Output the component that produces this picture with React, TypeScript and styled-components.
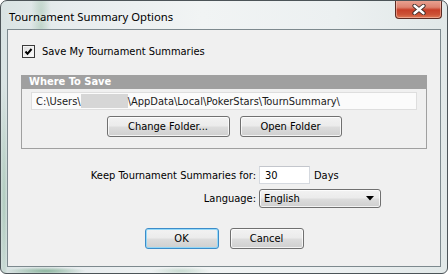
import React from "react";
import styled, { createGlobalStyle } from "styled-components";

const GlobalStyle = createGlobalStyle`
  html, body {
    margin: 0;
    padding: 0;
    background: #ffffff;
  }
  body {
    width: 448px;
    height: 274px;
    overflow: hidden;
  }
`;

const uiFont = `"DejaVu Sans Condensed", "DejaVu Sans", sans-serif`;

function App() {
  return (
    <>
      <GlobalStyle />
      <Window>
        <TitleBar>
          <Title>Tournament Summary Options</Title>
          <CloseButton aria-label="Close">
            <svg width="14" height="11" viewBox="0 0 14 11">
              <path
                d="M2.5 1.8 L11.5 9.2 M11.5 1.8 L2.5 9.2"
                stroke="#3a2a26"
                strokeWidth="4.2"
                strokeLinecap="round"
              />
              <path
                d="M2.5 1.8 L11.5 9.2 M11.5 1.8 L2.5 9.2"
                stroke="#ffffff"
                strokeWidth="2.4"
                strokeLinecap="round"
              />
            </svg>
          </CloseButton>
        </TitleBar>

        <Client>
          <CheckRow>
            <CheckBox>
              <svg width="11" height="11" viewBox="0 0 11 11">
                <path
                  d="M2.5 5.5 L4.5 7.8 L8.5 3"
                  fill="none"
                  stroke="#000"
                  strokeWidth="2"
                />
              </svg>
            </CheckBox>
            <span>Save My Tournament Summaries</span>
          </CheckRow>

          <Group>
            <GroupHeader>Where To Save</GroupHeader>
            <PathField>
              C:\Users\
              <Redacted />
              \AppData\Local\PokerStars\TournSummary\
            </PathField>
            <ButtonRow>
              <Button $width={123}>Change Folder...</Button>
              <Button $width={102}>Open Folder</Button>
            </ButtonRow>
          </Group>

          <Form>
            <Label>Keep Tournament Summaries for:</Label>
            <Inline>
              <NumberInput readOnly value="30" />
              <span>Days</span>
            </Inline>
            <Label>Language:</Label>
            <Select>
              <span>English</span>
              <svg width="8" height="5" viewBox="0 0 8 5">
                <path d="M0 0 H8 L4 4.5 Z" fill="#000" />
              </svg>
            </Select>
          </Form>

          <Footer>
            <Button $width={74} $default>
              OK
            </Button>
            <Button $width={74}>Cancel</Button>
          </Footer>
        </Client>
      </Window>
    </>
  );
}

const Window = styled.div`
  box-sizing: border-box;
  width: 448px;
  height: 274px;
  display: flex;
  flex-direction: column;
  border: 1px solid #4c5458;
  border-radius: 7px 7px 6px 6px;
  padding: 0 6px 6px;
  overflow: hidden;
  background:
    radial-gradient(ellipse 10px 70px at 40px 20px, rgba(110, 165, 125, 0.3), transparent),
    radial-gradient(ellipse 40px 4px at 45px 270px, rgba(80, 145, 105, 0.6), transparent),
    radial-gradient(ellipse 30px 4px at 180px 270px, rgba(120, 170, 140, 0.35), transparent),
    radial-gradient(ellipse 4px 120px at 3px 200px, rgba(110, 165, 130, 0.4), transparent),
    linear-gradient(to right, #d9e3e3 0%, #e7ecee 15%, #f1f4f4 45%, #ecf0f1 75%, #e1e8e8 100%);
`;

const TitleBar = styled.div`
  height: 28px;
  display: flex;
  align-items: center;
  justify-content: space-between;
`;

const Title = styled.span`
  margin-left: 2px;
  margin-top: 2px;
  font-family: "Noto Sans", "Open Sans", sans-serif;
  font-size: 11.3px;
  color: #000;
  text-shadow: 0 0 6px rgba(255, 255, 255, 0.9);
`;

const CloseButton = styled.div`
  align-self: flex-start;
  box-sizing: border-box;
  width: 47px;
  height: 19px;
  margin-top: -1px;
  margin-right: -1px;
  display: flex;
  align-items: center;
  justify-content: center;
  border: 1px solid #5c2b22;
  border-top: none;
  border-radius: 0 0 4px 4px;
  background: linear-gradient(#eaa595 0%, #dd8370 40%, #c73f28 55%, #cc5236 80%, #de7a55 100%);
  box-shadow: inset 0 0 0 1px rgba(255, 220, 210, 0.45);
`;

const Client = styled.div`
  flex: 1;
  display: flex;
  flex-direction: column;
  border: 1px solid #7d898e;
  background: #f0f0f0;
  padding: 15px 13px 0;
  font-family: ${uiFont};
  font-size: 11px;
  color: #000;
`;

const CheckRow = styled.div`
  height: 13px;
  margin-left: 1px;
  display: flex;
  align-items: center;
  gap: 7px;
`;

const CheckBox = styled.div`
  box-sizing: border-box;
  width: 13px;
  height: 13px;
  display: flex;
  align-items: center;
  justify-content: center;
  border: 1px solid #3a3a3a;
  background: linear-gradient(135deg, #dcdcdc, #ffffff);
  box-shadow: inset 0 0 0 1px #f4f4f4;
`;

const Group = styled.div`
  box-sizing: border-box;
  width: 406px;
  margin-top: 17px;
  padding-bottom: 11px;
  border: 1px solid #a0a0a0;
  border-top: none;
  display: flex;
  flex-direction: column;
`;

const GroupHeader = styled.div`
  height: 14px;
  line-height: 14px;
  margin: 0 -1px;
  padding-left: 8px;
  background: #a0a0a0;
  color: #ffffff;
  font-weight: bold;
  font-size: 11px;
`;

const PathField = styled.div`
  box-sizing: border-box;
  height: 18px;
  margin: 3px 9px 0;
  padding-left: 4px;
  display: flex;
  align-items: center;
  white-space: nowrap;
  border: 1px solid #dedede;
  background: #fbfbfb;
  color: #1a1a1a;
`;

const Redacted = styled.span`
  display: inline-block;
  width: 47px;
  height: 14px;
  background: #d6d6d6;
`;

const ButtonRow = styled.div`
  margin-top: 6px;
  display: flex;
  justify-content: center;
  gap: 10px;
`;

const Button = styled.div<{ $width: number; $default?: boolean }>`
  box-sizing: border-box;
  width: ${(p) => p.$width}px;
  height: 21px;
  display: flex;
  align-items: center;
  justify-content: center;
  border: 1px solid ${(p) => (p.$default ? "#3c8cc9" : "#707070")};
  border-radius: 3px;
  background: linear-gradient(#f2f2f2 0%, #ebebeb 48%, #dddddd 52%, #cfcfcf 100%);
  box-shadow: inset 0 0 0 1px
    ${(p) => (p.$default ? "rgba(140, 215, 250, 0.9)" : "rgba(255, 255, 255, 0.75)")};
  color: #000;
`;

const Form = styled.div`
  margin-top: 17px;
  display: grid;
  grid-template-columns: 235px auto;
  column-gap: 3px;
  row-gap: 5px;
  align-items: center;
`;

const Label = styled.span`
  text-align: right;
`;

const Inline = styled.div`
  display: flex;
  align-items: center;
  gap: 4px;
`;

const NumberInput = styled.input`
  box-sizing: border-box;
  width: 51px;
  height: 18px;
  margin: 0;
  padding: 0 0 0 5px;
  border: 1px solid #d5d9df;
  border-top-color: #c3c6cc;
  background: #ffffff;
  font-family: ${uiFont};
  font-size: 11px;
  color: #000;
  outline: none;
`;

const Select = styled.div`
  box-sizing: border-box;
  width: 122px;
  height: 19px;
  padding: 0 6px 0 4px;
  display: flex;
  align-items: center;
  justify-content: space-between;
  border: 1px solid #707070;
  border-radius: 3px;
  background: linear-gradient(#f2f2f2 0%, #ebebeb 48%, #dddddd 52%, #cfcfcf 100%);
  box-shadow: inset 0 0 0 1px rgba(255, 255, 255, 0.75);
`;

const Footer = styled.div`
  margin-top: 20px;
  display: flex;
  justify-content: center;
  gap: 11px;
`;

export default App;
